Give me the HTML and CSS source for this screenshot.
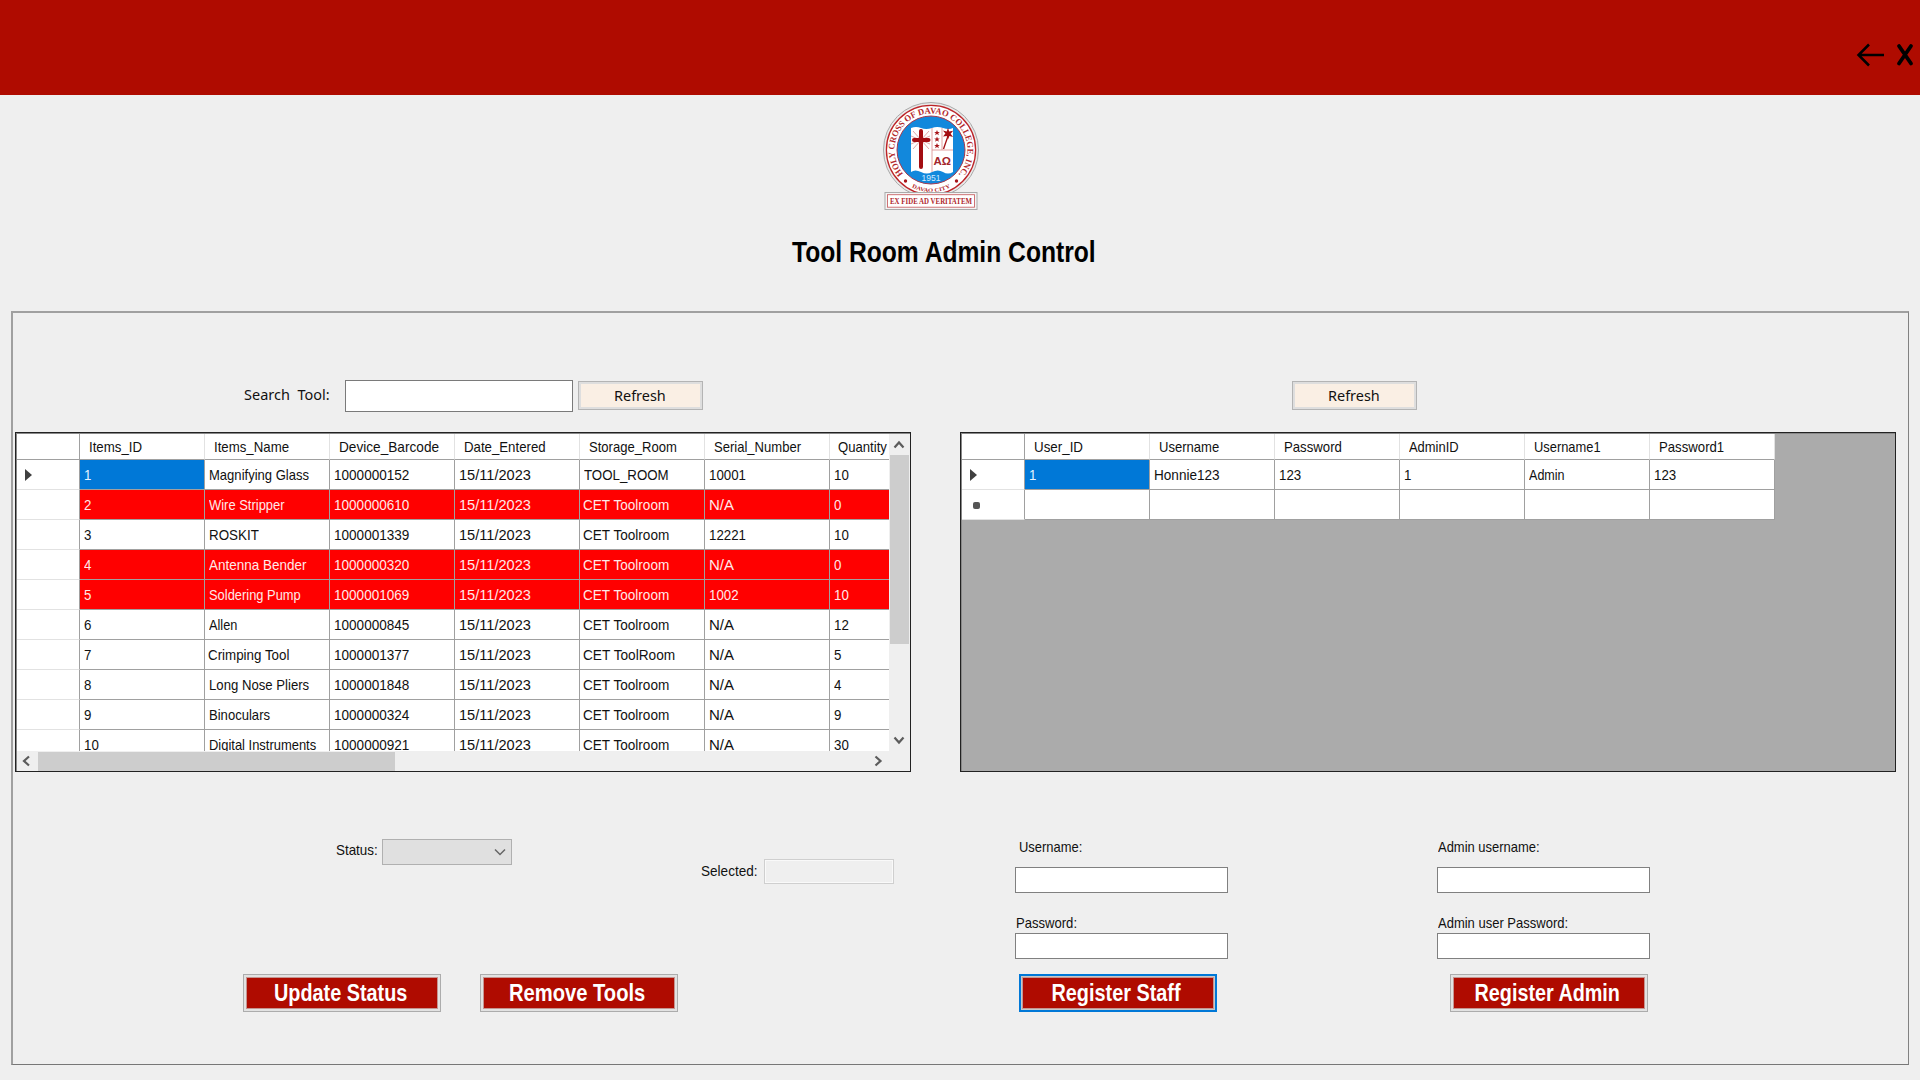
FILE: index.html
```html
<!DOCTYPE html>
<html lang="en">
<head>
<meta charset="utf-8">
<title>Tool Room Admin Control</title>
<link rel="stylesheet" href="styles.css">
</head>
<body>
<header class="topbar">
  <svg class="back" width="30" height="26" viewBox="0 0 30 26"><path d="M28 13H3M13 2.500L2.500 13L13 23.500" fill="none" stroke="#000" stroke-width="2.500"/></svg>
  <svg class="close" width="20" height="26" viewBox="0 0 20 26"><path d="M4 4L16 21.500M16 4L4 21.500" fill="none" stroke="#000" stroke-width="3.800" stroke-linecap="round"/></svg>
</header>
<div class="brand">
  <svg class="logo" width="100" height="112" viewBox="0 0 100 112">
    <defs>
      <path id="ring" d="M24.500 76.100A36.500 36.500 0 1 1 75.500 76.100"/>
      <path id="ringLow" d="M24 83A42 42 0 0 0 76 83"/>
    </defs>
    <circle cx="50" cy="50" r="47.500" fill="#e9e9e9" stroke="#aaa" stroke-width="1"/>
    <circle cx="50" cy="50" r="44.600" fill="#fff" stroke="#bd2428" stroke-width="1.300"/>
    <circle cx="50" cy="50" r="34" fill="#1288dc" stroke="#a33b50" stroke-width="1"/>
    <text class="seal" font-size="8.800"><textPath href="#ring" startOffset="3" textLength="167" lengthAdjust="spacingAndGlyphs">HOLY CROSS OF DAVAO COLLEGE, INC.</textPath></text>
    <text class="seal" font-size="5.500"><textPath href="#ringLow" startOffset="8" textLength="40" lengthAdjust="spacingAndGlyphs">DAVAO CITY</textPath></text>
    <circle cx="24.500" cy="81" r="1.700" fill="#a8161b"/><circle cx="75.500" cy="81" r="1.700" fill="#a8161b"/>
    <path d="M30 28q5-2 10 0t11 0q5-2 11 0t10 0V72q-5 3-10 0t-11 0q-5 3-11 0t-10 0z" fill="#fff"/>
    <path d="M51 28V72M51 50H72M61 28V50" stroke="#db8a8c" stroke-width=".8"/>
    <path d="M32 31l16 18M48 31L32 49M30 36l19 8M49 36l-19 8" stroke="#d89090" stroke-width=".8"/>
    <path d="M40 31V67M33 40H47.500" stroke="#a30d12" stroke-width="4" stroke-linecap="round"/>
    <path d="M67 36L62.500 49" stroke="#a30d12" stroke-width="1.300"/>
    <path d="M67 28l1.200 3.500 4-.8-2.600 3 2.500 3.200-3.700-.8L67 39.500l-1.300-3.600-3.700.7 2.400-3-2.500-3 3.800.8z" fill="#a30d12"/>
    <path d="M56 30l.8 2h2l-1.600 1.200.7 2L56 34l-1.900 1.200.7-2L53.200 32h2zM56 36.500l.8 2h2l-1.600 1.200.7 2L56 40.500l-1.900 1.200.7-2-1.600-1.200h2zM56 43l.8 2h2l-1.600 1.200.7 2L56 47l-1.900 1.200.7-2L53.200 45h2z" fill="#a8161b"/>
    <text x="52.500" y="65" class="greek" textLength="17.500" lengthAdjust="spacingAndGlyphs">A&#937;</text>
    <text x="40.500" y="81" class="year" textLength="19" lengthAdjust="spacingAndGlyphs">1951</text>
    <rect x="4" y="92.500" width="92" height="17" fill="#f4f4f4" stroke="#aaa"/>
    <rect x="6.500" y="94.700" width="87" height="12.500" fill="#fff" stroke="#c96467" stroke-width=".9"/>
    <text x="9" y="104" class="motto" textLength="82" lengthAdjust="spacingAndGlyphs">EX FIDE AD VERITATEM</text>
  </svg>
  <h1><span class="t mid" data-w="304">Tool Room Admin Control</span></h1>
</div>

<main class="panel">
  <section class="tools">
    <div class="toolbar">
      <label class="search-label"><span class="t" data-w="86">Search  Tool:</span></label>
      <div class="search-input"></div>
      <div class="btn-refresh"><span class="t mid" data-w="52">Refresh</span></div>
    </div>
    <div class="datagrid">
      <div class="view">
        <div class="row head"><div class="rh"></div><div><span class="t" data-w="53">Items_ID</span></div><div><span class="t" data-w="75">Items_Name</span></div><div><span class="t" data-w="100">Device_Barcode</span></div><div><span class="t" data-w="82">Date_Entered</span></div><div><span class="t" data-w="88">Storage_Room</span></div><div><span class="t" data-w="87">Serial_Number</span></div><div class="qty"><span class="t" data-w="49">Quantity</span></div></div>
        <div class="row"><div class="rh"><i class="current"></i></div><div class="selected"><span class="t">1</span></div><div><span class="t" data-w="100">Magnifying Glass</span></div><div><span class="t" data-w="75">1000000152</span></div><div><span class="t" data-w="72">15/11/2023</span></div><div><span class="t" data-w="85">TOOL_ROOM</span></div><div><span class="t">10001</span></div><div><span class="t">10</span></div></div>
        <div class="row alert"><div class="rh"></div><div><span class="t">2</span></div><div><span class="t" data-w="76">Wire Stripper</span></div><div><span class="t" data-w="75">1000000610</span></div><div><span class="t" data-w="72">15/11/2023</span></div><div class="room"><span class="t" data-w="86">CET Toolroom</span></div><div><span class="t" data-w="25">N/A</span></div><div><span class="t">0</span></div></div>
        <div class="row"><div class="rh"></div><div><span class="t">3</span></div><div><span class="t" data-w="50">ROSKIT</span></div><div><span class="t" data-w="75">1000001339</span></div><div><span class="t" data-w="72">15/11/2023</span></div><div class="room"><span class="t" data-w="86">CET Toolroom</span></div><div><span class="t">12221</span></div><div><span class="t">10</span></div></div>
        <div class="row alert"><div class="rh"></div><div><span class="t">4</span></div><div><span class="t" data-w="97">Antenna Bender</span></div><div><span class="t" data-w="75">1000000320</span></div><div><span class="t" data-w="72">15/11/2023</span></div><div class="room"><span class="t" data-w="86">CET Toolroom</span></div><div><span class="t" data-w="25">N/A</span></div><div><span class="t">0</span></div></div>
        <div class="row alert"><div class="rh"></div><div><span class="t">5</span></div><div><span class="t" data-w="92">Soldering Pump</span></div><div><span class="t" data-w="75">1000001069</span></div><div><span class="t" data-w="72">15/11/2023</span></div><div class="room"><span class="t" data-w="86">CET Toolroom</span></div><div><span class="t">1002</span></div><div><span class="t">10</span></div></div>
        <div class="row"><div class="rh"></div><div><span class="t">6</span></div><div><span class="t" data-w="28">Allen</span></div><div><span class="t" data-w="75">1000000845</span></div><div><span class="t" data-w="72">15/11/2023</span></div><div class="room"><span class="t" data-w="86">CET Toolroom</span></div><div><span class="t" data-w="25">N/A</span></div><div><span class="t">12</span></div></div>
        <div class="row"><div class="rh"></div><div><span class="t">7</span></div><div class="room"><span class="t" data-w="81">Crimping Tool</span></div><div><span class="t" data-w="75">1000001377</span></div><div><span class="t" data-w="72">15/11/2023</span></div><div class="room"><span class="t" data-w="92">CET ToolRoom</span></div><div><span class="t" data-w="25">N/A</span></div><div><span class="t">5</span></div></div>
        <div class="row"><div class="rh"></div><div><span class="t">8</span></div><div><span class="t" data-w="100">Long Nose Pliers</span></div><div><span class="t" data-w="75">1000001848</span></div><div><span class="t" data-w="72">15/11/2023</span></div><div class="room"><span class="t" data-w="86">CET Toolroom</span></div><div><span class="t" data-w="25">N/A</span></div><div><span class="t">4</span></div></div>
        <div class="row"><div class="rh"></div><div><span class="t">9</span></div><div><span class="t" data-w="61">Binoculars</span></div><div><span class="t" data-w="75">1000000324</span></div><div><span class="t" data-w="72">15/11/2023</span></div><div class="room"><span class="t" data-w="86">CET Toolroom</span></div><div><span class="t" data-w="25">N/A</span></div><div><span class="t">9</span></div></div>
        <div class="row"><div class="rh"></div><div><span class="t">10</span></div><div><span class="t" data-w="107">Digital Instruments</span></div><div><span class="t" data-w="75">1000000921</span></div><div><span class="t" data-w="72">15/11/2023</span></div><div class="room"><span class="t" data-w="86">CET Toolroom</span></div><div><span class="t" data-w="25">N/A</span></div><div><span class="t">30</span></div></div>
      </div>
      <div class="vbar">
        <svg width="19" height="21" viewBox="0 0 19 21"><path d="M4.500 13.500L9 8.500L13.500 13.500" fill="none" stroke="#5c5c5c" stroke-width="2.200"/></svg>
        <div class="vthumb"></div>
        <svg width="19" height="21" viewBox="0 0 19 21"><path d="M4.500 7.500L9 12.500L13.500 7.500" fill="none" stroke="#5c5c5c" stroke-width="2.200"/></svg>
      </div>
      <div class="hbar">
        <svg width="21" height="19" viewBox="0 0 21 19"><path d="M12 4.500L7 9L12 13.500" fill="none" stroke="#5c5c5c" stroke-width="2.200"/></svg>
        <div class="hthumb"></div>
        <svg width="21" height="19" viewBox="0 0 21 19"><path d="M6.500 4.500L11.500 9L6.500 13.500" fill="none" stroke="#5c5c5c" stroke-width="2.200"/></svg>
      </div>
    </div>
    <div class="fields">
      <label class="status-label"><span class="t" data-w="42">Status:</span></label>
      <div class="combo"><svg width="14" height="10" viewBox="0 0 14 10"><path d="M2 2.500L7 7.500L12 2.500" fill="none" stroke="#666" stroke-width="1.500"/></svg></div>
      <label class="selected-label"><span class="t" data-w="57">Selected:</span></label>
      <div class="readonly"></div>
    </div>
    <div class="actions">
      <div class="btn"><span class="t mid" data-w="133">Update Status</span></div>
      <div class="btn"><span class="t mid" data-w="136">Remove Tools</span></div>
    </div>
  </section>

  <section class="users">
    <div class="toolbar">
      <div class="btn-refresh"><span class="t mid" data-w="52">Refresh</span></div>
    </div>
    <div class="datagrid empty">
      <div class="view">
        <div class="row head"><div class="rh"></div><div><span class="t" data-w="49">User_ID</span></div><div><span class="t" data-w="60">Username</span></div><div><span class="t" data-w="58">Password</span></div><div><span class="t" data-w="50">AdminID</span></div><div><span class="t" data-w="67">Username1</span></div><div><span class="t" data-w="65">Password1</span></div></div>
        <div class="row"><div class="rh"><i class="current"></i></div><div class="selected"><span class="t">1</span></div><div><span class="t" data-w="66">Honnie123</span></div><div><span class="t">123</span></div><div><span class="t">1</span></div><div><span class="t" data-w="36">Admin</span></div><div><span class="t">123</span></div></div>
        <div class="row"><div class="rh"><i class="fresh"></i></div><div></div><div></div><div></div><div></div><div></div><div></div></div>
      </div>
    </div>
    <div class="forms">
      <div class="form">
        <label class="in4"><span class="t" data-w="63">Username:</span></label>
        <div class="input first"></div>
        <label class="in2"><span class="t" data-w="61">Password:</span></label>
        <div class="input"></div>
        <div class="btn focus"><span class="t mid" data-w="129">Register Staff</span></div>
      </div>
      <div class="form">
        <label class="in2"><span class="t" data-w="102">Admin username:</span></label>
        <div class="input first"></div>
        <label class="in2"><span class="t" data-w="130">Admin user Password:</span></label>
        <div class="input"></div>
        <div class="btn wide"><span class="t mid" data-w="145">Register Admin</span></div>
      </div>
    </div>
  </section>
</main>
<script src="fit.js"></script>
</body>
</html>
```

FILE: fit.js
```js
// Condense each caption to the width given in its data-w attribute.
document.querySelectorAll('.t[data-w]').forEach(function (el) {
  el.style.transform = 'scaleX(' + el.dataset.w / el.offsetWidth + ')';
});
```

FILE: styles.css
```css
* { box-sizing: border-box; }
body {
  margin: 0;
  width: 1920px;
  height: 1080px;
  overflow: hidden;
  background: #efefef;
  color: #111;
  font: 15px/18px "Liberation Sans", Arial, sans-serif;
}
.t {
  display: inline-block;
  white-space: pre;
  transform: scaleX(.887);
  transform-origin: left center;
}
.t.mid { transform-origin: center; }

.topbar {
  display: flex;
  justify-content: flex-end;
  gap: 8px;
  height: 95px;
  padding: 42px 5px 0 0;
  background: #af0b00;
}
.close { margin-left: 1px; }

.brand {
  display: flex;
  flex-direction: column;
  align-items: flex-start;
  height: 216px;
}
.logo { margin: 5px 0 0 881px; }
.seal { font-family: "Liberation Serif", serif; font-weight: bold; fill: #b3272b; }
.greek { font: bold 11px "Liberation Sans", sans-serif; fill: #a3262c; }
.year { font: 8.5px "Liberation Sans", sans-serif; fill: #d4ecff; }
.motto { font: bold 7.5px "Liberation Serif", serif; fill: #b0282c; }
h1 {
  display: flex;
  justify-content: center;
  width: 304px;
  margin: 23px 0 0 792px;
  color: #000;
  font-size: 29px;
  line-height: 34px;
}

.panel {
  display: flex;
  width: 1898px;
  height: 754px;
  margin-left: 11px;
  border: 1px solid #868686;
  border-width: 2px 1px 1px 2px;
  border-color: #a0a0a0 #828282 #777 #a0a0a0;
}
.tools { width: 896px; margin-left: 2px; }
.users { width: 936px; margin-left: 49px; }

.toolbar {
  display: flex;
  height: 119px;
  padding-top: 67px;
  font: 15px/20px "Noto Sans", "Open Sans", sans-serif;
}
.search-label { width: 86px; margin: 4px 15px 0 229px; }
.search-input {
  width: 228px;
  height: 32px;
  background: #fff;
  border: 1px solid #7a7a7a;
}
.btn-refresh {
  display: flex;
  align-items: center;
  justify-content: center;
  width: 125px;
  height: 29px;
  margin: 1px 0 0 5px;
  padding: 0 2px 1px 0;
  background: #faefe4;
  border: 1px solid #b4b4b4;
  box-shadow: inset 0 0 0 2px #dedede;
}
.users .btn-refresh { margin-left: 332px; }

.datagrid {
  display: grid;
  grid-template: 317px 20px / 873px 19px;
  height: 340px;
  border: 1px solid #222;
  box-shadow: inset 1px 1px 0 #888;
  padding: 1px;
  background: #efefef;
}
.datagrid.empty { background: #ababab; grid-template: 1fr / 1fr; }
.view { overflow: hidden; }
.tools .view { background: #fff; margin-right: 1px; }
.row { display: flex; height: 30px; }
.row > div {
  flex: none;
  width: 125px;
  padding: 6px 0 0 4px;
  background: #fff;
  border-right: 1px solid #a0a0a0;
  border-bottom: 1px solid #a0a0a0;
}
.row > .room { padding-left: 3px; }
.row > .rh {
  width: 63px;
  padding: 0 0 0 8px;
  border-bottom-color: #e2e2e2;
}
.row.head { height: 26px; }
.row.head > div { padding: 4px 0 0 9px; border-right-color: #e2e2e2; }
.row.head > .rh { border-right-color: #a0a0a0; border-bottom-color: #a0a0a0; }
.row.head > .qty { padding-left: 8px; }
.row.alert > div:not(.rh) { background: #f00; color: #ffe9e9; }
.row > .selected { background: #0078d7; color: #e6f3ff; }
.current {
  display: block;
  width: 7px;
  height: 12px;
  margin-top: 9px;
  background: #404040;
  clip-path: polygon(0 0, 100% 50%, 0 100%);
}
.fresh {
  display: block;
  width: 7px;
  height: 7px;
  margin: 12px 0 0 3px;
  background: #555;
  border-radius: 2px;
}

.vbar, .hbar { display: flex; justify-content: space-between; background: #efefef; }
.vbar { flex-direction: column; }
.vthumb { height: 189px; margin-bottom: auto; background: #cdcdcd; }
.hbar { width: 873px; padding-top: 1px; }
.hthumb { width: 357px; margin-right: auto; background: #cdcdcd; }

.fields { display: flex; align-items: flex-start; height: 202px; padding-top: 66px; }
.status-label { width: 42px; margin: 3px 4px 0 321px; }
.combo {
  display: flex;
  align-items: center;
  justify-content: flex-end;
  width: 130px;
  height: 26px;
  margin-top: 1px;
  padding-right: 4px;
  background: #e0e0e0;
  border: 1px solid #b0b0b0;
}
.selected-label { width: 57px; margin: 24px 6px 0 189px; }
.readonly {
  width: 130px;
  height: 25px;
  margin-top: 21px;
  border: 1px solid #cfcfcf;
  box-shadow: inset 0 0 0 1px #f9f9f9;
}
.actions { display: flex; gap: 39px; padding-left: 228px; }
.btn {
  display: flex;
  align-items: center;
  justify-content: center;
  width: 198px;
  height: 38px;
  padding-right: 3px;
  background: #af0b00;
  border: 1px solid #acacac;
  box-shadow: inset 0 0 0 2px #e2e2e2, inset 0 0 0 3px #c59490;
  color: #fff;
  font-size: 24px;
  font-weight: bold;
}
.btn.focus { border: 2px solid #0078d7; box-shadow: inset 0 0 0 1px #c8c8c8, inset 0 0 0 2px #c59490; }
.forms { display: flex; gap: 209px; padding: 66px 0 0 55px; }
.form { display: flex; flex-direction: column; width: 213px; }
.form label { height: 18px; }
.in4 { padding-left: 4px; }
.in2 { padding-left: 1px; }
.input { height: 26px; background: #fff; border: 1px solid #808080; }
.input.first { margin: 11px 0 21px; }
.form label + .input:not(.first) { margin-top: 1px; }
.form .btn { margin: 15px 0 0 4px; }
.form .btn.wide { margin-left: 13px; }
```
